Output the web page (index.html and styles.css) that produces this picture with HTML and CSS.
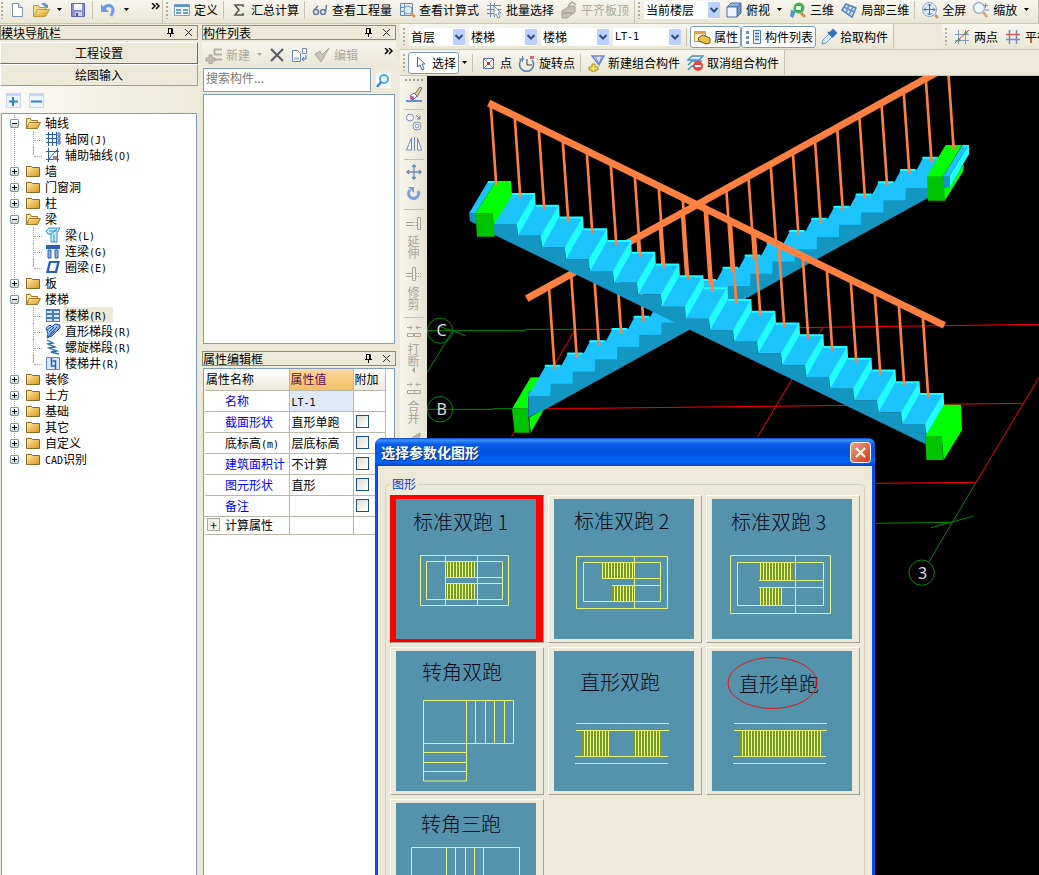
FILE: index.html
```html
<!DOCTYPE html>
<html lang="zh-CN">
<head>
  <meta charset="UTF-8">
  <title>选择参数化图形</title>
  <link rel="stylesheet" href="styles.css">
</head>
<body>
  <!-- Icon sprite -->
  <svg class="sprite" aria-hidden="true">
    <defs>
      <linearGradient id="gFolder" x1="0" y1="0" x2="1" y2="1"><stop offset="0" stop-color="#fff3a8"/><stop offset="1" stop-color="#d9921c"/></linearGradient>
      <linearGradient id="gBlue" x1="0" y1="0" x2="1" y2="1"><stop offset="0" stop-color="#d5e6fb"/><stop offset="1" stop-color="#4f83cf"/></linearGradient>
      <linearGradient id="gRed" x1="0" y1="0" x2="1" y2="1"><stop offset="0" stop-color="#f0a58c"/><stop offset="1" stop-color="#cf3510"/></linearGradient>
      <pattern id="hatch" width="3" height="6" patternUnits="userSpaceOnUse"><rect width="3" height="6" fill="#789a2c"/><rect width="1" height="6" fill="#ecfc7c"/></pattern>
      <symbol id="i-new" viewBox="0 0 18 18"><path d="M4.500 2.500h6l4 4v9h-10z" fill="#fff" stroke="#7b90b5"/><path d="M10.500 2.500v4h4" fill="#d5e2f5" stroke="#7b90b5"/></symbol>
      <symbol id="i-open" viewBox="0 0 18 18"><path d="M1.500 15.500v-11h5l1 2h6v3" fill="#f3d98c" stroke="#c89a3c"/><path d="M1.500 15.500l4-7h12l-4 7z" fill="url(#gFolder)" stroke="#c89a3c"/><path d="M9 3q4-3 6 1l1-1v4h-4l1-1q-1-2-4-3z" fill="#6a95c8"/></symbol>
      <symbol id="i-save" viewBox="0 0 18 18"><path d="M2.500 2.500h13v13h-13z" fill="#8a90e0" stroke="#6468b8"/><path d="M5 3h8v6h-8z" fill="#f2f4ff"/><path d="M6 11h7v4h-7z" fill="#d3d6ea"/><path d="M7 12h2v3h-2z" fill="#4a4e90"/></symbol>
      <symbol id="i-undo" viewBox="0 0 18 18"><path d="M4 9q3-6 8-4q4 3 0 10" fill="none" stroke="#7098e8" stroke-width="3"/><path d="M2 3v8h8z" fill="#7098e8"/></symbol>
      <symbol id="i-define" viewBox="0 0 18 18"><path d="M1.500 3.500h15v11h-15z" fill="#f4f8ff" stroke="#7f9fcb"/><path d="M2 4h14v2h-14z" fill="#5c8fd8"/><path d="M3 8h5v2h-5zM3 11h5v2h-5zM10 8h5v2h-5zM10 11h5v2h-5z" fill="#6c9ce0"/></symbol>
      <symbol id="i-sum" viewBox="0 0 18 18"><path d="M13 6V4H5l4 5l-4 5h8v-2" fill="none" stroke="#555" stroke-width="1.600"/></symbol>
      <symbol id="i-glasses" viewBox="0 0 18 18"><g fill="#dfe9f5" stroke="#667fa0" stroke-width="1.500"><circle cx="5" cy="11" r="2.500"/><circle cx="12" cy="11" r="2.500"/><path d="M3 9l4-4M14.500 11l1-7" fill="none"/></g></symbol>
      <symbol id="i-calc" viewBox="0 0 18 18"><path d="M2.500 2.500h12v12h-12zM2.500 6.500h12M2.500 10.500h12M6.500 2.500v12" fill="#e5ecfb" stroke="#6b86bb"/><circle cx="10" cy="9" r="4" fill="#d8f0fc" stroke="#7d9ccc"/><path d="M13 12l4 4" stroke="#d89848" stroke-width="2.500"/></symbol>
      <symbol id="i-batch" viewBox="0 0 18 18"><path d="M2 4.500h14M2 8.500h14M2 12.500h9M5.500 2v14M9.500 2v14" fill="none" stroke="#6b86bb"/><path d="M9 5l7 7h-3l2 4l-2 1l-2-4l-2 2z" fill="#fff" stroke="#7990b8"/></symbol>
      <symbol id="i-slab" viewBox="0 0 18 18"><path d="M2 10l8-5h5v6l-8 6h-5z" fill="#c5c2b4" stroke="#a3a092"/><path d="M3 12h9M8 5l4-4l4 3" fill="none" stroke="#a3a092" stroke-width="1.500"/></symbol>
      <symbol id="i-cube" viewBox="0 0 18 18"><path d="M2 6l4-4h10l-4 4z" fill="#8db8ee" stroke="#52719c"/><path d="M12 6l4-4v10l-4 4z" fill="#6a90c4" stroke="#52719c"/><path d="M2 6h10v10h-10z" fill="#eef5fe" stroke="#52719c"/></symbol>
      <symbol id="i-3d" viewBox="0 0 18 18"><circle cx="10" cy="7" r="5.500" fill="#45b557"/><path d="M7 4l6 1l-1 5l-6-1z" fill="#e9fbe6" stroke="#37944a"/><path d="M2 9l5 1l-3 7l-3-2z" fill="#5a91cf"/><path d="M12 12l4 4" stroke="#d68d3f" stroke-width="3"/></symbol>
      <symbol id="i-part3d" viewBox="0 0 18 18"><path d="M2 9l4-6l10 4l-4 9z" fill="#d6e8fb" stroke="#4f82bd" stroke-width="1.500"/><path d="M9 4l-3 8M13 6l-4 8M4 6l10 5" fill="none" stroke="#5f92ca" stroke-width="1.500"/></symbol>
      <symbol id="i-full" viewBox="0 0 18 18"><circle cx="8.500" cy="8.500" r="7" fill="#e2f0fd" stroke="#8b9fb9"/><path d="M8.500 3v11M3 8.500h11M6.500 5l2-2l2 2M6.500 12l2 2l2-2M5 6.500l-2 2l2 2M12 6.500l2 2l-2 2" fill="none" stroke="#3f6fb5"/><path d="M14 14l3 3" stroke="#c7995e" stroke-width="2.500"/></symbol>
      <symbol id="i-zoom" viewBox="0 0 18 18"><circle cx="7" cy="7" r="5.500" fill="#edf7fe" stroke="#a7b5c8" stroke-width="1.500"/><path d="M11 11l4 5" stroke="#d2a565" stroke-width="2.500"/><path d="M13.500 2v5M11 4.500h5M13 9h4" stroke="#7c96bc"/></symbol>
      <symbol id="i-prop" viewBox="0 0 18 18"><path d="M1.500 3.500h11v10h-11z" fill="#fff3db" stroke="#e29340"/><path d="M1 3h12v3h-12z" fill="#f09c40"/><path d="M5 10l5-3l7 3v5l-4 1l-7-3z" fill="#eac044" stroke="#725a1c"/></symbol>
      <symbol id="i-list" viewBox="0 0 18 18"><path d="M2 3h3v3H2zM2 8h3v3H2zM2 13h3v3H2z" fill="#6a8fc0"/><path d="M9.500 2.500h7v13h-7z" fill="#eaf2fd" stroke="#4d79b8"/><path d="M11 5.500h4M11 8.500h4M11 11.500h4" stroke="#3d6cb5" stroke-width="1.500"/></symbol>
      <symbol id="i-pick" viewBox="0 0 18 18"><path d="M3 16l1-4l6-6l3 3l-6 6z" fill="#dceefa" stroke="#6997bd"/><path d="M9 4l5 5M11 5l3-3l3 3l-3 3z" fill="#3b70b8" stroke="#3b70b8" stroke-width="2"/></symbol>
      <symbol id="i-twopt" viewBox="0 0 18 18"><path d="M2 6.500h14M2 12.500h14M5.500 2v14M12.500 2v14" stroke="#8296c8"/><path d="M2 15L16 2" stroke="#b54a4a"/><circle cx="6" cy="12" r="1.500" fill="#4e9b3e"/><circle cx="13" cy="5" r="1.500" fill="#4e9b3e"/></symbol>
      <symbol id="i-para" viewBox="0 0 18 18"><path d="M2 11.500h14M5.500 2v14M12.500 2v14" stroke="#7389c2" stroke-width="1.500"/><path d="M2 6.500h14" stroke="#cc5858" stroke-width="1.500"/></symbol>
      <symbol id="i-cursor" viewBox="0 0 18 18"><path d="M6.500 3v10l2.500-2l2 5l2-1l-2-5h3z" fill="#fff" stroke="#4d6ba0"/></symbol>
      <symbol id="i-point" viewBox="0 0 18 18"><path d="M4.500 4.500h10v10h-10z" fill="#fff" stroke="#5b6fa8"/><path d="M5 5l9 9M14 5l-9 9" stroke="#7b8fc4"/><path d="M8 8h3v3H8z" fill="#e02a2a"/></symbol>
      <symbol id="i-rot" viewBox="0 0 18 18"><path d="M4 5a7 7 0 1 0 10 1" fill="none" stroke="#5a7fb8" stroke-width="1.600"/><path d="M1 5h6M4.500 2v6" stroke="#5a7fb8"/><path d="M9 5v6h5" fill="none" stroke="#444"/><path d="M12 2h4v3h-4z" fill="#d66"/></symbol>
      <symbol id="i-comb" viewBox="0 0 18 18"><path d="M5 2h12l-5 9z" fill="#dfe5fb" stroke="#7585d0" stroke-width="1.500"/><path d="M8 2l4 8l3-8" fill="none" stroke="#7585d0"/><path d="M2 13h3v-3h3v3h3v3h-3v2h-3v-2H2z" fill="#f6e36a" stroke="#a58e22"/></symbol>
      <symbol id="i-uncomb" viewBox="0 0 18 18"><path d="M2 6l4-4h11l-4 4zM2 11l4-4h10M2 16l4-4h6" fill="#d6eefc" stroke="#4e92c4" stroke-width="1.500"/><circle cx="12" cy="12" r="5" fill="#e2463e"/><path d="M9 11h6v2H9z" fill="#fff"/></symbol>
      <symbol id="i-add" viewBox="0 0 18 18"><path d="M9 3.500h8M9 8.500h8M9 13.500h8M9.500 3v6" stroke="#b5b2a5" stroke-width="2"/><path d="M1 12h3V9h3v3h3v3H7v3H4v-3H1z" fill="#c4c1b3" stroke="#a5a294"/></symbol>
      <symbol id="i-del" viewBox="0 0 18 18"><path d="M3 3l12 12M15 3L3 15" stroke="#5b5e68" stroke-width="2.200"/></symbol>
      <symbol id="i-copydoc" viewBox="0 0 18 18"><path d="M2.500 4.500h5l3 3v8h-8z" fill="#fff" stroke="#7085b4"/><path d="M4 11.500h5v2H4z" fill="#9db4dd"/><path d="M12.500 2.500h4v5h-4z" fill="#fff" stroke="#7085b4"/><path d="M16 9v4h-3M14 11l-2 2l2 2" fill="none" stroke="#4a6ecb"/></symbol>
      <symbol id="i-edit" viewBox="0 0 18 18"><path d="M2 8l5-3l2 4l7-7l-8 14z" fill="#c9c6b9" stroke="#aaa799"/></symbol>
      <symbol id="i-search" viewBox="0 0 18 18"><path d="M2 2h15v15H2z" fill="#f6faff"/><circle cx="10" cy="8" r="4" fill="#eef7ff" stroke="#4fa8e4" stroke-width="2"/><path d="M7 11l-4 5" stroke="#3a87cf" stroke-width="2.500"/></symbol>
      <symbol id="i-plus" viewBox="0 0 18 18"><path d="M2 2h15v15H2z" fill="#eef4ff"/><path d="M2 2h15v3H2z" fill="#c6d6fa"/><path d="M2.500 2.500h14v14h-14z" fill="none" stroke="#c6d6fa"/><path d="M9 6v9M5 10.500h9" stroke="#2f80c4" stroke-width="2"/></symbol>
      <symbol id="i-minus" viewBox="0 0 18 18"><path d="M2 2h15v15H2z" fill="#eef4ff"/><path d="M2 2h15v3H2z" fill="#c6d6fa"/><path d="M2.500 2.500h14v14h-14z" fill="none" stroke="#c6d6fa"/><path d="M4 10.500h11" stroke="#2f80c4" stroke-width="2"/></symbol>
      <symbol id="i-pin" viewBox="0 0 9 9"><path d="M2.500 0v5M6 0v5M2 .5h4M1 5.500h7M4.500 6v3" fill="none" stroke="#000"/><path d="M5 1h2v4H5z"/></symbol>
      <symbol id="i-x" viewBox="0 0 9 9"><path d="M1 1l7 7M8 1L1 8" stroke="#333"/></symbol>
      <symbol id="i-more" viewBox="0 0 9 7"><path d="M1 0l3 3l-3 3M5 0l3 3l-3 3" fill="none" stroke="#000" stroke-width="1.500"/></symbol>
      <symbol id="i-arr" viewBox="0 0 7 4"><path d="M1 0h5l-2.500 3z"/></symbol>
      <symbol id="i-combo" viewBox="0 0 12 16"><rect width="12" height="16" rx="1" fill="#bcd0fb"/><path d="M2.500 6l3.500 3.500L9.500 6" fill="none" stroke="#2f4d80" stroke-width="2"/></symbol>
      <!-- tree -->
      <symbol id="i-folder" viewBox="0 0 16 16"><path d="M1.500 13.500v-10h5l1 1h7v9z" fill="url(#gFolder)" stroke="#8a6a22"/></symbol>
      <symbol id="i-fopen" viewBox="0 0 16 16"><path d="M1.500 13.500v-10h4l1 2h6v2" fill="#fbe79a" stroke="#a07a28"/><path d="M1.500 13.500l3-6h11l-3 6z" fill="url(#gFolder)" stroke="#a07a28"/></symbol>
      <symbol id="i-grid" viewBox="0 0 16 16"><path d="M1 3.500h11M1 7.500h11M1 11.500h11M3.500 1v14M7.500 1v14M11.500 1v14" stroke="#2c5cb8" fill="none"/><path d="M13 2h2v3h-2zM13 6h2v3h-2zM13 10h2v3h-2z" fill="none" stroke="#2c5cb8"/></symbol>
      <symbol id="i-aux" viewBox="0 0 16 16"><path d="M1 4.500h13M1 12.500h13M3.500 1v14M12.500 1v14M3 13L12 3" stroke="#2c5cb8" fill="none"/><path d="M8 9h4v4H8z" fill="#8a8a9a"/></symbol>
      <symbol id="i-beam" viewBox="0 0 16 16"><path d="M1 4l3-3h11l-3 5v9h-6V7H3z" fill="#d3edfc" stroke="#2f8ed0"/><path d="M6 7l6-5M4 4h8M9 7v8" stroke="#2f8ed0"/></symbol>
      <symbol id="i-link" viewBox="0 0 16 16"><path d="M1 2h14v4H1z" fill="#2d60b4"/><path d="M3 7h3v8H3zM10 7h3v8h-3z" fill="#8bb1e8" stroke="#2d60b4"/></symbol>
      <symbol id="i-ring" viewBox="0 0 16 16"><path d="M4 2h11l-3 12H1z" fill="#2a61c0"/><path d="M6 4h6l-2 8H4z" fill="#fff"/></symbol>
      <symbol id="i-stair" viewBox="0 0 16 16"><path d="M1 2h14v13H1z" fill="#4779c8"/><path d="M2 4h5v2H2zM2 8h5v2H2zM2 12h5v2H2zM9 4h5v2H9zM9 8h5v2H9zM9 12h5v2H9z" fill="#dcebff"/></symbol>
      <symbol id="i-run" viewBox="0 0 16 16"><path d="M1 5l4-3l2 2l3-3l5 1v3l-8 8l-5 2l1-4z" fill="url(#gBlue)" stroke="#1c50a8"/><path d="M2 7l4-3M4 9l5-5M5 11l7-7M3 14l7-6" stroke="#1c50a8"/></symbol>
      <symbol id="i-spiral" viewBox="0 0 16 16"><path d="M2 1l6 3l-5 1l7 3l-6 1l8 3l-6 1l8 2" fill="none" stroke="#1e6fc4" stroke-width="1.300"/></symbol>
      <symbol id="i-well" viewBox="0 0 16 16"><path d="M1.500 2.500h13v12h-13z" fill="#d9e8ff" stroke="#5c86cc"/><path d="M6.500 3v8h4V6h-3M10.500 11v3" fill="none" stroke="#2a5cb0" stroke-width="1.500"/></symbol>
      <!-- edit strip -->
      <symbol id="i-brush" viewBox="0 0 18 18"><path d="M9 10l6-8l2 1l-5 9z" fill="#f2cd70" stroke="#5878b8"/><path d="M5 11l4-3l3 3l-4 4z" fill="#fff" stroke="#6a6aa8"/><circle cx="7" cy="13" r="2" fill="#c84f98"/><path d="M1 16h16" stroke="#6b93c8" stroke-width="2"/></symbol>
      <symbol id="i-copy" viewBox="0 0 18 18"><circle cx="5" cy="4.500" r="3.500" fill="#fff" stroke="#7c90b8"/><circle cx="12" cy="13" r="4" fill="#fff" stroke="#7c90b8"/><circle cx="12" cy="13" r="2" fill="none" stroke="#7c90b8"/><path d="M11 2l4 4M15 3v3h-3" fill="none" stroke="#5b7fbb"/></symbol>
      <symbol id="i-mirror" viewBox="0 0 18 18"><path d="M6.500 3v12H1.500zM12.500 3v12h4z" fill="#fff" stroke="#7088bc"/><path d="M9.500 2v14" stroke="#7088bc"/></symbol>
      <symbol id="i-move" viewBox="0 0 18 18"><path d="M9 2v14M2 9h14M7 4l2-2l2 2M7 14l2 2l2-2M4 7L2 9l2 2M14 7l2 2l-2 2" fill="none" stroke="#6a88b8" stroke-width="1.300"/></symbol>
      <symbol id="i-turn" viewBox="0 0 18 18"><path d="M5 5a5 5 0 1 0 8 1" fill="none" stroke="#7a9fe0" stroke-width="3"/><path d="M3 2h6v6z" fill="#7a9fe0"/></symbol>
      <symbol id="i-extend" viewBox="0 0 16 16"><path d="M0 7.500h7M0 10.500h7M11.500 2.500h3v12h-3z" fill="none" stroke="#a9a699"/><path d="M8 7.500h4M8 10.500h4" stroke="#a9a699" stroke-dasharray="1 1"/></symbol>
      <symbol id="i-trim" viewBox="0 0 16 16"><path d="M0 7.500h6M0 10.500h6M6.500 1.500h3v13h-3z" fill="none" stroke="#a9a699"/><path d="M10 7.500h6M10 10.500h6" stroke="#a9a699" stroke-dasharray="1 1"/></symbol>
      <symbol id="i-break" viewBox="0 0 16 16"><path d="M1 4.500h5M10 4.500h5M4 2.500l2 2l-2 2M12 2.500l-2 2l2 2M1.500 10.500h6v3h-6zM8.500 10.500h6v3h-6z" fill="none" stroke="#a9a699"/></symbol>
      <symbol id="i-merge" viewBox="0 0 16 16"><path d="M1 4.500h5M10 4.500h5M4 2.500l2 2l-2 2M12 2.500l-2 2l2 2M1.500 10.500h13v3h-13zM8.500 10.500v3" fill="none" stroke="#a9a699"/></symbol>
      <symbol id="i-split" viewBox="0 0 16 16"><path d="M2 10l8-6l4-2v3l-5 7z" fill="#b9b6a8" stroke="#a9a699"/></symbol>
    </defs>
  </svg>

  <div class="top-row">
    <div class="toolbar file-bar">
      <span class="grip"></span>
      <button class="tool" title="新建"><svg class="ic"><use href="#i-new"/></svg></button>
      <button class="tool" title="打开"><svg class="ic"><use href="#i-open"/></svg><svg class="arr"><use href="#i-arr"/></svg></button>
      <button class="tool" title="保存"><svg class="ic"><use href="#i-save"/></svg></button>
      <span class="sep"></span>
      <button class="tool" title="撤销"><svg class="ic"><use href="#i-undo"/></svg><svg class="arr"><use href="#i-arr"/></svg></button>
      <button class="more" title="更多"><svg><use href="#i-more"/></svg></button>
    </div>
    <div class="toolbar">
      <span class="grip"></span>
      <button class="tool"><svg class="ic"><use href="#i-define"/></svg>定义</button>
      <span class="sep"></span>
      <button class="tool"><svg class="ic"><use href="#i-sum"/></svg>汇总计算</button>
      <span class="sep"></span>
      <button class="tool"><svg class="ic"><use href="#i-glasses"/></svg>查看工程量</button>
      <button class="tool"><svg class="ic"><use href="#i-calc"/></svg>查看计算式</button>
      <button class="tool"><svg class="ic"><use href="#i-batch"/></svg>批量选择</button>
      <button class="tool" disabled><svg class="ic"><use href="#i-slab"/></svg>平齐板顶</button>
    </div>
    <div class="toolbar wide">
      <span class="grip"></span>
      <span class="combo w76"><select aria-label="楼层"><option>当前楼层</option></select><svg><use href="#i-combo"/></svg></span>
      <button class="tool"><svg class="ic"><use href="#i-cube"/></svg>俯视<svg class="arr"><use href="#i-arr"/></svg></button>
      <button class="tool"><svg class="ic"><use href="#i-3d"/></svg>三维</button>
      <button class="tool"><svg class="ic"><use href="#i-part3d"/></svg>局部三维</button>
      <span class="sep"></span>
      <button class="tool"><svg class="ic"><use href="#i-full"/></svg>全屏</button>
      <button class="tool"><svg class="ic"><use href="#i-zoom"/></svg>缩放<svg class="arr"><use href="#i-arr"/></svg></button>
    </div>
  </div>

  <main>
    <!-- Module navigation -->
    <aside class="dock nav">
      <div class="dock-title"><span>模块导航栏</span><svg><use href="#i-pin"/></svg><svg><use href="#i-x"/></svg></div>
      <button class="nav-btn raised">工程设置</button>
      <button class="nav-btn">绘图输入</button>
      <div class="nav-tools">
        <button title="展开"><svg class="ic"><use href="#i-plus"/></svg></button>
        <button title="折叠"><svg class="ic"><use href="#i-minus"/></svg></button>
      </div>
      <ul class="tree">
        <li class="open"><i></i><svg><use href="#i-fopen"/></svg>轴线
          <ul>
            <li><svg><use href="#i-grid"/></svg><a href="#">轴网<b>(J)</b></a></li>
            <li><svg><use href="#i-aux"/></svg><a href="#">辅助轴线<b>(O)</b></a></li>
          </ul>
        </li>
        <li><i></i><svg><use href="#i-folder"/></svg>墙</li>
        <li><i></i><svg><use href="#i-folder"/></svg>门窗洞</li>
        <li><i></i><svg><use href="#i-folder"/></svg>柱</li>
        <li class="open"><i></i><svg><use href="#i-fopen"/></svg>梁
          <ul>
            <li><svg><use href="#i-beam"/></svg><a href="#">梁<b>(L)</b></a></li>
            <li><svg><use href="#i-link"/></svg><a href="#">连梁<b>(G)</b></a></li>
            <li><svg><use href="#i-ring"/></svg><a href="#">圈梁<b>(E)</b></a></li>
          </ul>
        </li>
        <li><i></i><svg><use href="#i-folder"/></svg>板</li>
        <li class="open"><i></i><svg><use href="#i-fopen"/></svg>楼梯
          <ul>
            <li><svg><use href="#i-stair"/></svg><a href="#" class="current">楼梯<b>(R)</b></a></li>
            <li><svg><use href="#i-run"/></svg><a href="#">直形梯段<b>(R)</b></a></li>
            <li><svg><use href="#i-spiral"/></svg><a href="#">螺旋梯段<b>(R)</b></a></li>
            <li><svg><use href="#i-well"/></svg><a href="#">楼梯井<b>(R)</b></a></li>
          </ul>
        </li>
        <li><i></i><svg><use href="#i-folder"/></svg>装修</li>
        <li><i></i><svg><use href="#i-folder"/></svg>土方</li>
        <li><i></i><svg><use href="#i-folder"/></svg>基础</li>
        <li><i></i><svg><use href="#i-folder"/></svg>其它</li>
        <li><i></i><svg><use href="#i-folder"/></svg>自定义</li>
        <li><i></i><svg><use href="#i-folder"/></svg><b>CAD</b>识别</li>
      </ul>
    </aside>

    <!-- Component list and properties -->
    <aside class="dock comps">
      <div class="dock-title"><span>构件列表</span><svg><use href="#i-pin"/></svg><svg><use href="#i-x"/></svg></div>
      <div class="comp-tools">
        <button class="tool" disabled><svg class="ic"><use href="#i-add"/></svg>新建<svg class="arr"><use href="#i-arr"/></svg></button>
        <button class="tool tight" title="删除"><svg class="ic"><use href="#i-del"/></svg></button>
        <button class="tool tight" title="复制"><svg class="ic"><use href="#i-copydoc"/></svg></button>
        <button class="tool" disabled><svg class="ic"><use href="#i-edit"/></svg>编辑</button>
        <button class="more" title="更多"><svg><use href="#i-more"/></svg></button>
      </div>
      <div class="search">
        <input type="text" placeholder="搜索构件..." aria-label="搜索构件">
        <button title="搜索"><svg class="ic"><use href="#i-search"/></svg></button>
      </div>
      <div class="comp-list"></div>
      <div class="dock-title"><span>属性编辑框</span><svg><use href="#i-pin"/></svg><svg><use href="#i-x"/></svg></div>
      <div class="props">
        <table>
          <thead>
            <tr><th class="c-name">属性名称</th><th class="c-val">属性值</th><th class="c-add">附加</th></tr>
          </thead>
          <tbody>
            <tr><td>名称</td><td class="sel"><b>LT-1</b></td><td></td></tr>
            <tr><td>截面形状</td><td>直形单跑</td><td><input type="checkbox" aria-label="附加 截面形状"></td></tr>
            <tr><td class="plain">底标高<b>(m)</b></td><td>层底标高</td><td><input type="checkbox" aria-label="附加 底标高"></td></tr>
            <tr><td>建筑面积计</td><td>不计算</td><td><input type="checkbox" aria-label="附加 建筑面积"></td></tr>
            <tr><td>图元形状</td><td>直形</td><td><input type="checkbox" aria-label="附加 图元形状"></td></tr>
            <tr><td>备注</td><td></td><td><input type="checkbox" aria-label="附加 备注"></td></tr>
            <tr class="last"><td class="plain group"><button title="展开">+</button>计算属性</td><td></td><td></td></tr>
          </tbody>
        </table>
      </div>
    </aside>

    <section class="work">
      <div class="bar-row">
        <div class="toolbar">
          <span class="grip"></span>
          <span class="combo w56"><select aria-label="楼层"><option>首层</option></select><svg><use href="#i-combo"/></svg></span>
          <span class="combo w68"><select aria-label="类别"><option>楼梯</option></select><svg><use href="#i-combo"/></svg></span>
          <span class="combo w68"><select aria-label="类型"><option>楼梯</option></select><svg><use href="#i-combo"/></svg></span>
          <span class="combo w68 mono"><select aria-label="构件"><option>LT-1</option></select><svg><use href="#i-combo"/></svg></span>
          <span class="sep"></span>
          <button class="tool on"><svg class="ic"><use href="#i-prop"/></svg>属性</button>
          <button class="tool on"><svg class="ic"><use href="#i-list"/></svg>构件列表</button>
          <button class="tool"><svg class="ic"><use href="#i-pick"/></svg>拾取构件</button>
        </div>
        <div class="toolbar axis-bar">
          <span class="grip"></span>
          <button class="tool"><svg class="ic"><use href="#i-twopt"/></svg>两点</button>
          <button class="tool"><svg class="ic"><use href="#i-para"/></svg>平行</button>
        </div>
      </div>
      <div class="bar-row">
        <div class="toolbar">
          <span class="grip"></span>
          <button class="tool on"><svg class="ic"><use href="#i-cursor"/></svg>选择</button>
          <button class="drop" title="选择方式"><svg class="arr"><use href="#i-arr"/></svg></button>
          <span class="sep"></span>
          <button class="tool"><svg class="ic"><use href="#i-point"/></svg>点</button>
          <button class="tool"><svg class="ic"><use href="#i-rot"/></svg>旋转点</button>
          <span class="sep"></span>
          <button class="tool"><svg class="ic"><use href="#i-comb"/></svg>新建组合构件</button>
          <button class="tool"><svg class="ic"><use href="#i-uncomb"/></svg>取消组合构件</button>
        </div>
      </div>
      <div class="stage">
        <div class="strip">
          <span class="grip-h"></span>
          <button title="格式刷"><svg class="ic"><use href="#i-brush"/></svg></button>
          <hr>
          <button title="复制"><svg class="ic"><use href="#i-copy"/></svg></button>
          <button title="镜像"><svg class="ic"><use href="#i-mirror"/></svg></button>
          <hr>
          <button title="移动"><svg class="ic"><use href="#i-move"/></svg></button>
          <button title="旋转"><svg class="ic"><use href="#i-turn"/></svg></button>
          <hr>
          <button class="v" disabled><svg><use href="#i-extend"/></svg><span>延伸</span></button>
          <button class="v" disabled><svg><use href="#i-trim"/></svg><span>修剪</span></button>
          <hr>
          <button class="v more-v" disabled><svg><use href="#i-break"/></svg><span>打断</span></button>
          <button class="v" disabled><svg><use href="#i-merge"/></svg><span>合并</span></button>
          <button class="v" title="分割" disabled><svg><use href="#i-split"/></svg></button>
        </div>
        <svg class="scene" viewBox="-99 3 1836 2397" preserveAspectRatio="xMinYMin slice">
          <g class="axis">
            <path d="M-99 767H195V763H340M-99 1003H100V1001H205M-24 770L-99 893M-66 753L-23 767L17 782"/>
            <path d="M1548 1222L1407 1460M1248 1345L1475 1342M1413 1358L1538 1324"/>
            <circle cx="-60" cy="767" r="38"/><circle cx="-60" cy="1003" r="38"/><circle cx="1385" cy="1493" r="38"/>
          </g>
          <path class="grid" d="M340 763L455 763L1015 758L1737 748M205 1000L390 1000L1688 985M155 1085L345 765M893 1085L1090 755M1737 907L1548 1222L1248 1225"/>
          <g class="axis-name"><text x="-55" y="784">C</text><text x="-55" y="1020">B</text><text x="1388" y="1511">3</text></g>
          <!-- rear flight -->
          <path class="lime" d="M212 907H240L204 968V1000H157ZM208 1027L252 1003L212 1073Z"/>
          <path class="green" d="M156 1002L204 1000L208 1073H164Z"/>
          <g id="rear"></g>
          <path class="lime" d="M1457 210H1506L1450 303L1453 340L1512 268L1510 288L1456 374L1401 303Z"/>
          <path class="green" d="M1401 304H1450L1456 377H1404Z"/>
          <path class="blue" d="M1506 212H1524L1468 303H1450Z"/>
          <path class="cyan" d="M1508 210H1527V238L1470 335L1468 303L1522 215H1506Z"/>
          <path class="deep" d="M1450 303H1468L1470 335L1453 340Z"/>
          <g id="rearRail"></g>
          <!-- front flight -->
          <path class="blue" d="M85 318H107L47 415H27Z"/>
          <path class="cyan" d="M85 318H107L104 323H82Z"/>
          <path class="deep" d="M27 415H48V448L30 438Z"/>
          <g id="front"></g>
          <path class="lime" d="M107 318H153L156 360L101 450L98 415H47Z"/>
          <path class="green" d="M47 415H98L104 485H51Z"/>
          <path class="lime" d="M1452 989H1503L1506 1065L1451 1155L1445 1083H1397Z"/>
          <path class="green" d="M1396 1083H1445L1450 1155H1399Z"/>
          <g id="frontRail"></g>
        </svg>
      </div>
    </section>
  </main>

  <div class="dialog" role="dialog" aria-labelledby="dlgTitle">
    <div class="dialog-head">
      <h1 id="dlgTitle">选择参数化图形</h1>
      <button title="关闭"><svg viewBox="0 0 21 21"><rect x=".5" y=".5" width="20" height="20" rx="3" fill="url(#gRed)" stroke="#fff"/><path d="M6 6l9 9M15 6l-9 9" stroke="#fff" stroke-width="2.200"/></svg></button>
    </div>
    <div class="dialog-body">
      <fieldset>
        <legend>图形</legend>
        <div class="shapes">
          <button class="shape picked"><svg viewBox="0 0 140 140">
            <text x="17" y="31">标准双跑 1</text>
            <path class="fill" d="M49 62h30v16h-30zM49 84h30v16h-30z"/>
            <path d="M24.500 56.500h88v50h-88zM30.500 62.500h76v38h-76zM49.500 56v50M81.500 56v50M49 78.500h57M49 84.500h57"/>
          </svg></button>
          <button class="shape"><svg viewBox="0 0 140 140">
            <text x="20" y="30">标准双跑 2</text>
            <path class="fill" d="M48 63h31v16h-31zM58 86h21v16h-21z"/>
            <path d="M22.500 57.500h91v52h-91zM29.500 63.500h77v39h-77zM80.500 57v52M48 79.500h58M58 86.500h48"/>
          </svg></button>
          <button class="shape"><svg viewBox="0 0 140 140">
            <text x="19" y="31">标准双跑 3</text>
            <path class="fill" d="M47 63h34v18h-34zM47 88h23v18h-23z"/>
            <path d="M18.500 56.500h100v58h-100zM25.500 63.500h86v43h-86zM83.500 56v58M47 81.500h64M47 88.500h64"/>
          </svg></button>
          <button class="shape"><svg viewBox="0 0 140 140">
            <text x="26" y="29">转角双跑</text>
            <path d="M27.500 49.500h90v43h-90zM70.500 49v81h-43v-38M79.500 49v43M89.500 49v43M98.500 49v43M108.500 49v43M27 101.500h43M27 111.500h43M27 120.500h43"/>
          </svg></button>
          <button class="shape"><svg viewBox="0 0 140 140">
            <text x="26" y="39">直形双跑</text>
            <path class="fill" d="M28 79h28v26h-28zM80 79h28v26h-28z"/>
            <path d="M22 72.500h93M22 79.500h93M21 105.500h93M21 112.500h93"/>
          </svg></button>
          <button class="shape"><svg viewBox="0 0 140 140">
            <text x="27" y="41">直形单跑</text>
            <path class="fill" d="M28 79h81v26h-81z"/>
            <path d="M22 72.500h93M22 79.500h93M21 105.500h93M21 112.500h93"/>
            <ellipse cx="60.500" cy="32" rx="44.500" ry="25.500"/>
          </svg></button>
          <button class="shape"><svg viewBox="0 0 140 140">
            <text x="25" y="29">转角三跑</text>
            <path d="M15.500 130.500v-86h108v86M50.500 44v43h37v-43M59.500 44v43M69.500 44v43M78.500 44v43M15 87.500h35M87 87.500h36"/>
          </svg></button>
        </div>
      </fieldset>
    </div>
  </div>

  <script src="scene.js"></script>
</body>
</html>
```
FILE: styles.css
```css
* {
  box-sizing: border-box;
}
body {
  margin: 0;
  height: 100vh;
  display: flex;
  flex-direction: column;
  overflow: hidden;
  position: relative;
  background: #ece9d8;
  color: #000;
  font: 12px/16px "Noto Sans CJK SC", sans-serif;
}
button, select, input {
  font: inherit;
  color: inherit;
  margin: 0;
  padding: 0;
  border: 0;
  background: none;
  border-radius: 0;
}
b {
  font: 10px/10px "DejaVu Sans Mono", monospace;
}
svg {
  display: block;
  flex: none;
}
.sprite {
  position: absolute;
  width: 0;
  height: 0;
}
.ic {
  width: 18px;
  height: 18px;
}
.arr {
  width: 7px;
  height: 4px;
  margin-left: 3px;
}

/* toolbars */
.top-row {
  display: flex;
  height: 24px;
  flex: none;
  border-bottom: 1px solid #cbc8b6;
}
.toolbar {
  display: flex;
  align-items: center;
  flex: none;
  padding: 0 2px 3px 3px;
  background: linear-gradient(#f7f6ef, #e9e6d4);
  border-right: 1px solid #c5c2b0;
}
.file-bar {
  width: 163px;
  padding-left: 1px;
}
.wide {
  flex: 1;
  overflow: hidden;
}
.grip {
  width: 2px;
  height: 17px;
  margin-right: 2px;
  background: repeating-linear-gradient(#b0ad9e 0 2px, transparent 2px 4px);
}
.sep {
  width: 1px;
  height: 18px;
  margin: 0 3px 0 2px;
  background: #c5c2b0;
}
.tool {
  display: flex;
  align-items: center;
  gap: 3px;
  height: 22px;
  padding: 0 3px;
  white-space: nowrap;
  flex: none;
}
.tool.tight {
  padding: 0 2px;
}
.tool.on {
  padding: 0 2px;
  background: #fff;
  border: 1px solid #7f9db9;
  border-radius: 3px;
}
.tool:disabled {
  color: #aca899;
}
.tool:disabled .arr {
  fill: #aca899;
}
.drop {
  width: 11px;
  height: 22px;
}
.drop .arr {
  margin-left: 2px;
}
.more {
  margin-left: auto;
}
.more svg {
  width: 9px;
  height: 7px;
}
.file-bar .more {
  padding-bottom: 8px;
}
.combo {
  display: flex;
  align-items: center;
  height: 18px;
  margin: 0 2px;
  background: #fff;
  flex: none;
}
.combo select {
  appearance: none;
  flex: 1;
  min-width: 0;
  height: 18px;
  padding-left: 2px;
}
.combo svg {
  width: 12px;
  height: 16px;
}
.w56 { width: 56px; }
.w68 { width: 68px; }
.w76 { width: 76px; }
.mono select {
  font: 10px "DejaVu Sans Mono", monospace;
}

main {
  display: flex;
  flex: 1;
  min-height: 0;
  gap: 4px;
}

/* docks */
.dock {
  display: flex;
  flex-direction: column;
  flex: none;
  padding-top: 1px;
}
.nav {
  width: 198px;
}
.comps {
  width: 194px;
}
.dock-title {
  display: flex;
  align-items: center;
  gap: 9px;
  height: 15px;
  flex: none;
  padding-right: 4px;
  border: 1px solid #8f8c80;
  line-height: 13px;
}
.dock-title span {
  flex: 1;
}
.dock-title svg {
  width: 9px;
  height: 9px;
}
.nav-btn {
  height: 22px;
  flex: none;
  border: 1px solid;
  border-color: #fff #a19e8e #a19e8e #fff;
}
.nav-btn.raised {
  margin-top: 2px;
  border-color: #fff #716f64 #716f64 #fff;
}
.nav-tools {
  display: flex;
  gap: 5px;
  height: 27px;
  flex: none;
  padding: 4px 4px;
  background: linear-gradient(90deg, #fbfaf6, #ece9d8);
}
.tree {
  flex: 1;
  margin: 0 1px;
  padding: 1px 0 0 8px;
  border: 1px solid #7f9db9;
  border-bottom: 0;
  background: #fff;
}
ul {
  list-style: none;
  margin: 0;
  padding: 0;
}
.tree svg {
  width: 16px;
  height: 16px;
  display: inline-block;
  vertical-align: top;
}
.tree > li {
  background: repeating-linear-gradient(#aca899 0 1px, transparent 1px 2px) 4px 0 / 1px 100% no-repeat;
}
.tree > li:last-child {
  background-size: 1px 8px;
}
.tree > li > i {
  display: inline-block;
  width: 9px;
  height: 9px;
  margin: 4px 6px 3px 0;
  vertical-align: top;
  border: 1px solid #7898b5;
  border-radius: 1px;
  background:
    linear-gradient(#000, #000) 1px 3px / 5px 1px no-repeat,
    linear-gradient(#000, #000) 3px 1px / 1px 5px no-repeat,
    linear-gradient(#fff, #d5d1c5);
}
.tree > li.open > i {
  background:
    linear-gradient(#000, #000) 1px 3px / 5px 1px no-repeat,
    linear-gradient(#fff, #d5d1c5);
}
.tree > li > svg {
  margin-right: 4px;
}
.tree ul {
  margin-left: 23px;
}
.tree ul li {
  display: flex;
  height: 16px;
  border-left: 1px dotted #aca899;
}
.tree ul li:last-child {
  border-image: linear-gradient(#aca899 50%, transparent 50%) 1;
}
.tree ul li::before {
  content: "";
  width: 8px;
  height: 9px;
  border-bottom: 1px dotted #aca899;
  margin-right: 3px;
}
.tree a {
  color: #000;
  text-decoration: none;
  padding: 0 6px 0 2px;
  margin-left: 2px;
}
.tree a.current {
  background: #ece9d8;
}

.comp-tools {
  display: flex;
  align-items: center;
  height: 25px;
  flex: none;
  margin-top: 2px;
  padding-right: 3px;
  background: linear-gradient(#f7f6ef, #e9e6d4);
}
.comp-tools .more {
  padding-bottom: 6px;
}
.search {
  display: flex;
  flex: none;
  height: 24px;
  margin: 1px 1px 2px;
}
.search input {
  flex: 1;
  min-width: 0;
  padding: 0 2px 4px;
  background: #fff;
  border: 1px solid #7f9db9;
}
.search input::placeholder {
  color: #7d7a70;
}
.search button {
  padding: 0 3px;
}
.comp-list {
  height: 250px;
  flex: none;
  margin: 0 1px 7px;
  background: #fff;
  border: 1px solid #7f9db9;
}
.props {
  flex: 1;
  min-height: 0;
  margin: 2px 1px 0;
  padding: 0 1px;
  background: #fff;
  border: 1px solid #7f9db9;
  border-bottom: 0;
}
table {
  table-layout: fixed;
  width: 180px;
  border-collapse: collapse;
}
th, td {
  height: 21px;
  padding: 0 0 0 2px;
  line-height: 14px;
  text-align: left;
  font-weight: normal;
  white-space: nowrap;
  overflow: hidden;
  border: solid #bab7ab;
  border-width: 0 1px 1px 0;
}
.last td {
  height: 18px;
}
th {
  padding-left: 1px;
  background: linear-gradient(#fff, #ece9d8);
}
.c-name { width: 84px; }
.c-val {
  width: 64px;
  color: #5c1050;
  background: linear-gradient(#fbd9a0, #f3bf62);
}
.c-add { width: 32px; }
td:first-child {
  padding-left: 20px;
  color: #00f;
}
td.plain {
  color: #000;
}
td.group {
  padding-left: 2px;
}
td.group button {
  width: 13px;
  height: 13px;
  margin-right: 5px;
  line-height: 9px;
  background: #f2f0e6;
  border: 1px solid #aca899;
}
td.sel {
  background: #dfe8f5;
}
td input {
  appearance: none;
  display: block;
  width: 13px;
  height: 13px;
  background: linear-gradient(135deg, #dcdcd7, #fff);
  border: 1px solid #1c5180;
}

/* work area */
.work {
  display: flex;
  flex-direction: column;
  flex: 1;
  min-width: 0;
}
.bar-row {
  display: flex;
  height: 26px;
  flex: none;
  overflow: hidden;
  border-bottom: 1px solid #cbc8b6;
}
.bar-row .grip {
  margin-right: 3px;
}
.bar-row .toolbar {
  padding-bottom: 0;
}
.bar-row .combo {
  margin: 0 3px 0 1px;
}
.axis-bar {
  margin-left: 48px;
}
.stage {
  display: flex;
  flex: 1;
  min-height: 0;
  background: #000;
}
.strip {
  display: flex;
  flex-direction: column;
  align-items: center;
  flex: none;
  width: 27px;
  overflow: hidden;
  background: linear-gradient(90deg, #f7f6ef, #e6e3d0);
}
.grip-h {
  width: 18px;
  height: 2px;
  margin: 3px 0 2px;
  flex: none;
  background: repeating-linear-gradient(90deg, #a19e8e 0 2px, transparent 2px 4px);
}
.strip button {
  padding: 2px 0;
  flex: none;
}
.strip hr {
  width: 20px;
  height: 1px;
  margin: 4px 0 1px;
  flex: none;
  border: 0;
  background: #c5c2b0;
}
.strip .v {
  padding: 4px 0 3px;
  color: #a9a699;
}
.v svg {
  width: 16px;
  height: 16px;
}
.v span {
  display: block;
  width: 12px;
  margin: 4px auto 0;
  line-height: 12px;
}
.more-v::after {
  content: "";
  display: block;
  width: 0;
  margin: 0 auto;
  border: 3px solid transparent;
  border-right-color: #a9a699;
  border-left: 0;
}
.scene {
  flex: 1;
  min-width: 0;
  height: 100%;
}
.axis {
  fill: none;
  stroke: #008a00;
  stroke-width: 3;
}
.axis-name {
  fill: #ddd;
  font: 48px "Noto Sans", sans-serif;
  text-anchor: middle;
}
.grid {
  fill: none;
  stroke: #f00;
  stroke-width: 3;
}
.lime { fill: #0f0; }
.green { fill: #00c400; }
.blue { fill: #1cc4ff; }
.cyan { fill: #20fcff; }
.deep { fill: #1496c2; }
.rail {
  fill: none;
  stroke: #ff8040;
  stroke-width: 21;
}
.post {
  fill: none;
  stroke: #ff8040;
  stroke-width: 8;
}

/* dialog floats over the drawing */
.dialog {
  position: absolute;
  left: 375px;
  top: 438px;
  bottom: 0;
  width: 500px;
  overflow: hidden;
  background: #0a50e0;
  border-radius: 7px 7px 0 0;
  display: flex;
  flex-direction: column;
}
.dialog-head {
  display: flex;
  align-items: center;
  height: 28px;
  flex: none;
  padding: 0 4px 0 6px;
  background: linear-gradient(#0a3fc0 0, #3a93ff 7%, #0a5ce8 22%, #0055e0 50%, #0066fc 85%, #0044c8);
}
.dialog h1 {
  flex: 1;
  margin: 0;
  color: #fff;
  font-size: 14px;
  line-height: 20px;
  text-shadow: 1px 1px #0a2a80;
}
.dialog-head svg {
  width: 21px;
  height: 21px;
}
.dialog-body {
  flex: 1;
  min-height: 0;
  overflow: hidden;
  margin: 0 3px;
  padding: 10px 7px 0;
  background: #ece9d8;
}
fieldset {
  min-width: 0;
  margin: 0;
  padding: 0 4px;
  border: 1px solid #d0d0bf;
  border-radius: 4px;
}
legend {
  padding: 0 2px;
  line-height: 16px;
  color: #0046d5;
}
.shapes {
  display: grid;
  grid-template-columns: repeat(3, 154px);
  gap: 4px;
  padding-top: 3px;
  height: 600px;
  align-content: start;
}
.shape {
  height: 148px;
  padding: 3px 7px 3px 5px;
  border: 1px solid;
  border-color: #fff #a5a294 #a5a294 #fff;
}
.shape.picked {
  background: #f00;
  border-color: #f00 #a5a294 #a5a294 #f00;
}
.shape svg {
  width: 140px;
  height: 140px;
  background: #5592ac;
}
.shape text {
  font-size: 20px;
  font-weight: 300;
  fill: #0a0a18;
}
.shape path {
  fill: none;
  stroke: #e4f578;
}
.shape .fill {
  fill: url(#hatch);
  stroke: none;
}
.shape ellipse {
  fill: none;
  stroke: #e01818;
}
```
FILE: scene.js
```js
const el = id => document.getElementById(id);

// Rear flight climbs to the right
const rx = 66.6, ry = 36.7;
let top1 = '', low = '', edges = '';
for (let i = 0; i < 18; i++) {
  const x = i * rx, y = -i * ry;
  top1 += `L${258 + x} ${871 + y}L${305 + x} ${871 + y}`;
  low = `L${271 + x} ${963 + y}L${205 + x} ${963 + y}` + low;
  edges += `M${256 + x} ${869 + y}h46l-3 6h-46z`;
}
el('rear').innerHTML =
  `<path class="deep" d="M205 950V1027L265 998L1405 368V300Z"/>` +
  `<path class="blue" d="M205 963${top1}L1405 300${low}Z"/>` +
  `<path class="cyan" d="${edges}"/>`;

let posts = '';
for (let i = 0; i < 19; i++) {
  const x = i * 66.5;
  posts += `M${267 + x} ${637 - i * ry}L${284 + x} ${885 - i * 36.8}`;
}
el('rearRail').innerHTML =
  `<path class="post" d="${posts}"/><path class="rail" d="M200 671L1520 -57"/>`;

// Front flight drops to the right
const fx = 72.1, fy = 35.3;
let side = '', treads = '', risers = '';
for (let i = 0; i < 18; i++) {
  const x = i * fx, y = i * fy;
  side += `L${100 + x} ${447 + y}L${172 + x} ${447 + y}`;
  treads += `M${153 + x} ${356 + y}L${225 + x} ${356 + y}L${172 + x} ${447 + y}H${100 + x}Z`;
  risers += `M${155 + x} ${354 + y}H${225 + x}L${227 + x} ${390 + y}L${174 + x} ${482 + y}L${170 + x} ${447 + y}L${221 + x} ${360 + y}H${155 + x}Z`;
}
el('front').innerHTML =
  `<path class="deep" d="M100 478${side}L1397 1108Z"/>` +
  `<path class="blue" d="${treads}"/><path class="cyan" d="${risers}"/>`;

posts = '';
for (let i = 0; i < 19; i++) {
  posts += `M${92 + i * 72} ${88 + i * 35}L${109 + i * 72} ${333 + i * fy}`;
}
el('frontRail').innerHTML =
  `<path class="post" d="${posts}"/><path class="rail" d="M86 84L1453 751"/>`;
```
